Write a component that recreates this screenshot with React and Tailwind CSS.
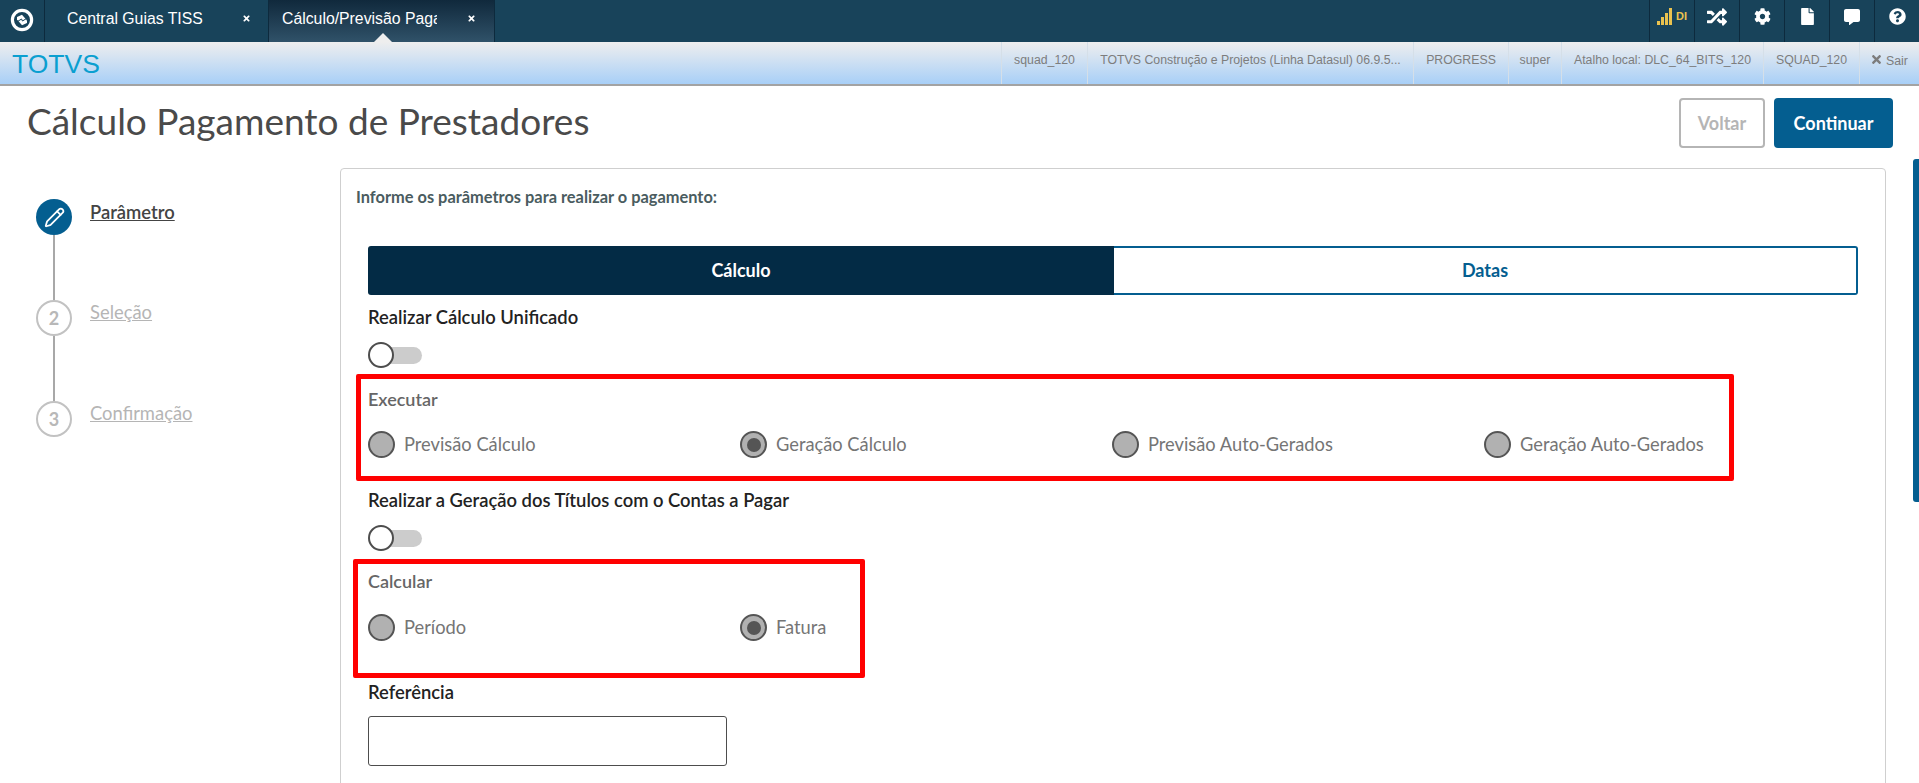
import React from 'react';
import { Pencil } from 'lucide-react';
import { FaRandom, FaCog, FaFile, FaCommentAlt, FaQuestionCircle, FaTimes } from 'react-icons/fa';

const sans = { fontFamily: '"Liberation Sans", Arial, sans-serif' };

const infoCells = [
  { label: 'squad_120', w: 'w-[86px]' },
  { label: 'TOTVS Construção e Projetos (Linha Datasul) 06.9.5...', w: 'w-[326px]' },
  { label: 'PROGRESS', w: 'w-[95px]' },
  { label: 'super', w: 'w-[53px]' },
  { label: 'Atalho local: DLC_64_BITS_120', w: 'w-[202px]' },
  { label: 'SQUAD_120', w: 'w-[96px]' },
];

const Logo = () => (
  <svg width="24" height="24" viewBox="0 0 24 24" fill="none">
    <circle cx="12" cy="12" r="9.6" stroke="white" strokeWidth="3.2" />
    <path d="M7 9 L12 6.8 L17 12.5 L17 15 L12 17.2 L7 11.5 Z" fill="white" />
    <path d="M7.5 13.5 L11.5 11 L12.5 13 L16.5 10.5" stroke="#18435a" strokeWidth="1" />
  </svg>
);

const Signal = () => (
  <svg width="16" height="17" viewBox="0 0 16 17" fill="#e9c24f">
    <rect x="0" y="13" width="3" height="4" />
    <rect x="4" y="9" width="3" height="8" />
    <rect x="8" y="5" width="3" height="12" />
    <rect x="12" y="0" width="3" height="17" />
  </svg>
);

const Tab = ({ active, label, className }) => (
  <div className={`relative flex h-full items-center border-r border-[#0d2a3d] pb-[5px] ${className} ${active ? 'bg-gradient-to-b from-[#10293c] to-[#305269]' : ''}`}>
    <span className="overflow-hidden whitespace-nowrap text-[15.8px] text-white">{label}</span>
    <FaTimes className={`absolute top-[14px] text-[9px] text-white ${active ? 'left-[198px]' : 'left-[197px]'}`} />
    {active && (
      <span className="absolute bottom-0 left-[105px] h-0 w-0 border-x-[9px] border-b-[9px] border-x-transparent border-b-[#eeeeee]" />
    )}
  </div>
);

const Tool = ({ children }) => (
  <div className="flex h-full w-[45px] items-center justify-center border-l border-[#0d2a3d] pb-[9px] text-white">{children}</div>
);

const TopBar = () => (
  <div className="flex h-[42px] items-stretch justify-between bg-[#18435a]" style={sans}>
    <div className="flex">
      <div className="flex w-[45px] items-center justify-center border-r border-[#0d2a3d] pb-[3px]"><Logo /></div>
      <Tab label="Central Guias TISS" className="w-[224px] pl-[22px]" />
      <Tab active label={<span className="block w-[155px] overflow-hidden">Cálculo/Previsão Pagamento</span>} className="w-[226px] pl-[13px]" />
    </div>
    <div className="flex">
      <Tool>
        <div className="flex items-center gap-[3px]">
          <Signal />
          <span className="text-[11px] font-bold text-[#e9c24f]">DI</span>
        </div>
      </Tool>
      <Tool><FaRandom className="text-[20px]" /></Tool>
      <Tool><FaCog className="text-[17px]" /></Tool>
      <Tool><FaFile className="text-[17px]" /></Tool>
      <Tool><FaCommentAlt className="text-[16px]" /></Tool>
      <Tool><FaQuestionCircle className="text-[17px]" /></Tool>
    </div>
  </div>
);

const InfoBar = () => (
  <div className="flex h-[44px] items-stretch justify-between border-b-2 border-[#a3a3a3] bg-gradient-to-b from-[#eeeeee] to-[#a8cff7]" style={sans}>
    <div className="pl-[12px] pt-[2px] text-[26.5px] leading-[40px] text-[#0a9fd0]">TOTVS</div>
    <div className="flex">
      {infoCells.map((cell) => (
        <div key={cell.label} className={`flex items-start justify-center whitespace-nowrap border-l border-[#d5dfe8] pt-[9px] text-[12.3px] text-[#7d7d7d] ${cell.w}`}>
          {cell.label}
        </div>
      ))}
      <div className="flex w-[60px] items-start gap-[3px] border-l border-[#d5dfe8] pl-[10px] pt-[10px] text-[12.3px] text-[#7d7d7d]">
        <FaTimes className="mt-[1px] text-[13px]" /> Sair
      </div>
    </div>
  </div>
);

const Step = ({ n, label, active, last }) => (
  <div className={`flex gap-[18px] ${last ? '' : 'h-[101px]'}`}>
    <div className="flex w-[36px] flex-col items-center">
      {active ? (
        <div className="flex h-[36px] w-[36px] shrink-0 items-center justify-center rounded-full bg-[#045e90]">
          <Pencil size={21} color="white" strokeWidth={2} />
        </div>
      ) : (
        <div className="flex h-[36px] w-[36px] shrink-0 items-center justify-center rounded-full border-2 border-[#c2c2c2] text-[18px] font-bold text-[#b8b8b8]">{n}</div>
      )}
      {!last && <div className="w-[2px] flex-1 bg-[#a8a8a8]" />}
    </div>
    <span className={`h-fit text-[18.4px] leading-[24px] underline ${active ? 'mt-[1px] font-semibold text-[#444444]' : 'text-[#b5b5b5]'}`}>{label}</span>
  </div>
);

const Toggle = () => (
  <div className="relative h-[26px] w-[54px]">
    <div className="absolute left-[8px] right-0 top-[5px] h-[17px] rounded-full bg-[#cccccc]" />
    <div className="absolute left-0 top-0 h-[26px] w-[26px] rounded-full border-2 border-[#4d4d4d] bg-white" />
  </div>
);

const Radio = ({ label, checked }) => (
  <div className="flex items-center gap-[9px]">
    <div className="flex h-[27px] w-[27px] items-center justify-center rounded-full border-2 border-[#555555] bg-[#b1b1b1]">
      {checked && <div className="h-[14px] w-[14px] rounded-full bg-[#555555]" />}
    </div>
    <span className="text-[18.3px] text-[#757575]">{label}</span>
  </div>
);

const Fieldset = ({ title, className, children }) => (
  <div className={`rounded-[2px] border-[5px] border-[#ff0000] ${className}`}>
    <div className="text-[18px] font-semibold leading-[22px] text-[#666666]">{title}</div>
    {children}
  </div>
);

export default function App() {
  return (
    <div className="relative h-[783px] w-full overflow-hidden bg-white" style={{ fontFamily: 'Lato, "Noto Sans", sans-serif' }}>
      <TopBar />
      <InfoBar />

      <div className="flex h-[82px] items-start justify-between pl-[27px] pr-[26px]">
        <h1 className="pt-[12px] text-[37px] leading-[46px] text-[#4a4a4a]">Cálculo Pagamento de Prestadores</h1>
        <div className="flex gap-[9px] pt-[12px]">
          <button className="h-[50px] w-[86px] rounded-[4px] border-2 border-[#b5b5b5] text-[18px] font-bold text-[#b5b5b5]">Voltar</button>
          <button className="h-[50px] w-[119px] rounded-[4px] bg-[#045e90] text-[18px] font-bold text-white">Continuar</button>
        </div>
      </div>

      <div className="flex items-start">
        <div className="w-[340px] pl-[36px] pt-[31px]">
          <Step n={1} label="Parâmetro" active />
          <Step n={2} label="Seleção" />
          <Step n={3} label="Confirmação" last />
        </div>

        <div className="h-[700px] w-[1546px] rounded-[4px] border border-[#cfcfcf] pl-[27px] pr-[27px] pt-[19px]">
          <p className="ml-[-12px] text-[16.4px] font-bold leading-[18px] text-[#4a5c60]">Informe os parâmetros para realizar o pagamento:</p>

          <div className="mt-[40px] flex h-[49px] w-[1490px] text-[18px] font-bold">
            <div className="flex w-[746px] items-center justify-center rounded-l-[3px] bg-[#032b45] text-white">Cálculo</div>
            <div className="flex flex-1 items-center justify-center rounded-r-[3px] border-2 border-l-0 border-[#045e90] text-[#045e90]">Datas</div>
          </div>

          <div className="mt-[11px] text-[18.4px] font-semibold leading-[22px] text-[#222222]">Realizar Cálculo Unificado</div>
          <div className="mt-[14px]"><Toggle /></div>

          <Fieldset title="Executar" className="ml-[-12px] mt-[6px] h-[107px] w-[1378px] pl-[7px] pt-[9px]">
            <div className="mt-[21px] grid w-[1488px] grid-cols-4">
              <Radio label="Previsão Cálculo" />
              <Radio label="Geração Cálculo" checked />
              <Radio label="Previsão Auto-Gerados" />
              <Radio label="Geração Auto-Gerados" />
            </div>
          </Fieldset>

          <div className="mt-[8px] text-[18.4px] font-semibold leading-[22px] text-[#222222]">Realizar a Geração dos Títulos com o Contas a Pagar</div>
          <div className="mt-[14px]"><Toggle /></div>

          <Fieldset title="Calcular" className="ml-[-15px] mt-[8px] h-[119px] w-[512px] pl-[10px] pt-[6px]">
            <div className="mt-[22px] grid w-[744px] grid-cols-2">
              <Radio label="Período" />
              <Radio label="Fatura" checked />
            </div>
          </Fieldset>

          <div className="mt-[3px] text-[18.4px] font-semibold leading-[22px] text-[#222222]">Referência</div>
          <div className="mt-[13px] h-[50px] w-[359px] rounded-[3px] border border-[#4d4d4d]" />
        </div>
      </div>

      <div className="absolute right-0 top-[159px] h-[343px] w-[6px] rounded-l-[3px] bg-[#045e90]" />
    </div>
  );
}
